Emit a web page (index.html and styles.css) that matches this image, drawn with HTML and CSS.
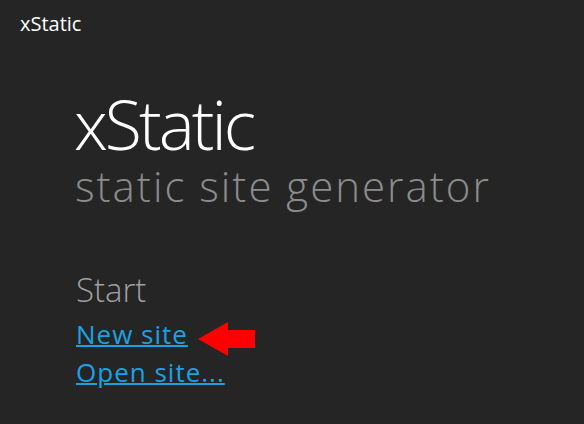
FILE: index.html
```html
<!DOCTYPE html>
<html>
<head>
<meta charset="utf-8">
<link rel="stylesheet" href="styles.css">
</head>
<body>
<div class="app-title">xStatic</div>
<main class="hub">
  <h1 class="hub-title">xStatic</h1>
  <p class="hub-subtitle">static site generator</p>
  <section class="start">
    <h2 class="start-heading">Start</h2>
    <div class="start-row">
      <a class="start-link" href="#">New site</a>
      <svg class="arrow" width="58" height="34" viewBox="0 0 58 34"><polygon points="0,17 30,0 30,8 57,8 57,26 30,26 30,34" fill="#ff0000"/></svg>
    </div>
    <div class="start-row">
      <a class="start-link" href="#">Open site...</a>
    </div>
  </section>
</main>
</body>
</html>
```
FILE: styles.css
```css
html, body {
  margin: 0;
  padding: 0;
  background: #252525;
  width: 584px;
  height: 424px;
  overflow: hidden;
  font-family: "Open Sans", "Noto Sans", sans-serif;
}
.app-title {
  color: #ffffff;
  font-size: 20px;
  padding: 12px 0 0 20px;
  line-height: 24px;
}
.hub {
  padding: 53px 0 0 76px;
}
.hub-title {
  margin: 0 0 0 -2px;
  font-weight: 300;
  font-size: 68px;
  line-height: 70px;
  letter-spacing: -3px;
  color: #ffffff;
}
.hub-subtitle {
  margin: 2px 0 0 -1px;
  font-weight: 300;
  font-size: 42px;
  line-height: 50px;
  letter-spacing: 2px;
  color: #8c8c8c;
}
.start {
  margin-top: 59px;
}
.start-heading {
  margin: 0;
  font-weight: 300;
  font-size: 33px;
  line-height: 40px;
  color: #a0a0a0;
}
.start-row {
  display: flex;
  align-items: flex-start;
  gap: 10px;
  height: 37px;
}
.start-heading + .start-row {
  margin-top: 6px;
}
.start-row + .start-row {
  margin-top: 1px;
}
.start-link {
  color: #1ba1e2;
  font-size: 26px;
  line-height: 37px;
  letter-spacing: 1px;
  text-decoration: underline;
  text-decoration-thickness: 2px;
}
.arrow {
  display: block;
  margin-top: 6px;
}
```
